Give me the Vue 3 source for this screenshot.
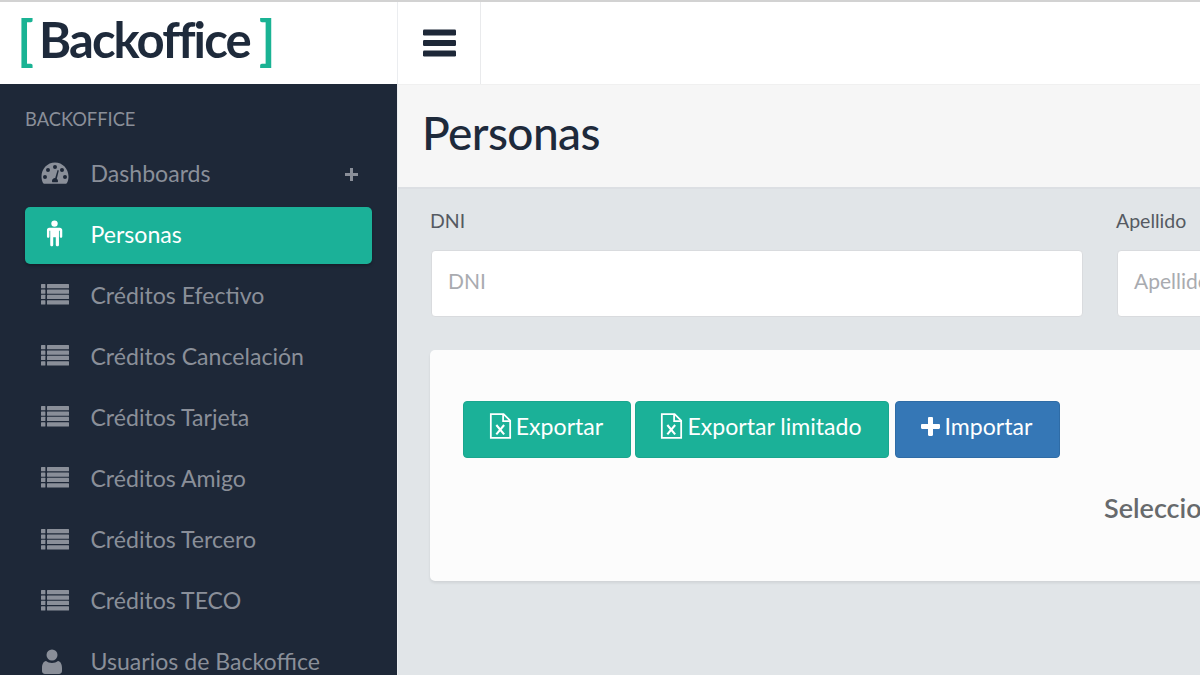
<script setup>
const items = [
  { label: 'Dashboards', icon: 'gauge', plus: true },
  { label: 'Personas', icon: 'male', active: true },
  { label: 'Créditos Efectivo', icon: 'list' },
  { label: 'Créditos Cancelación', icon: 'list' },
  { label: 'Créditos Tarjeta', icon: 'list' },
  { label: 'Créditos Amigo', icon: 'list' },
  { label: 'Créditos Tercero', icon: 'list' },
  { label: 'Créditos TECO', icon: 'list' },
  { label: 'Usuarios de Backoffice', icon: 'user' }
]
const rows = [0, 1, 2, 3]
</script>

<template>
  <div class="app">
    <aside class="side">
      <div class="logo"><span class="br">[</span><span class="word">Backoffice</span><span class="br">]</span></div>
      <nav class="nav">
        <div class="nav-title">BACKOFFICE</div>
        <div v-for="it in items" :key="it.label" class="item" :class="{ active: it.active }">
          <span class="ico">
            <svg v-if="it.icon === 'gauge'" width="28" height="22" viewBox="0 0 28 22" fill="currentColor">
              <path fill-rule="evenodd" d="M14 0.5C6.4 0.5 0.5 6.8 0.5 14.6c0 2.4.5 4.6 1.5 6.5.3.5.7.7 1.2.7h21.6c.5 0 .9-.2 1.2-.7 1-1.9 1.5-4.1 1.5-6.5C27.5 6.8 21.6.5 14 .5zM14 3a2 2 0 1 1 0 4 2 2 0 0 1 0-4zM7 6a2 2 0 1 1 0 4 2 2 0 0 1 0-4zm14 0a2 2 0 1 1 0 4 2 2 0 0 1 0-4zM4 13a2 2 0 1 1 0 4 2 2 0 0 1 0-4zm20 0a2 2 0 1 1 0 4 2 2 0 0 1 0-4zM16.6 8l1.2.5-2 8.2c.7.6 1.2 1.4 1.2 2.3 0 .5-.1.9-.4 1.3h-5.2c-.3-.4-.4-.8-.4-1.3 0-1.6 1.3-3 3-3h.2L16.6 8z"/>
            </svg>
            <svg v-else-if="it.icon === 'male'" width="17" height="27" viewBox="0 0 16 25" fill="currentColor">
              <circle cx="8" cy="3.2" r="3"/>
              <path d="M3 7h10c1.300 0 2.300 1 2.300 2.300v6c0 .8-.5 1.300-1.200 1.300s-1.100-.5-1.100-1.300V10h-.8v13c0 1-.6 1.600-1.400 1.600S9.200 24 9.200 23v-7H6.800v7c0 1-.6 1.600-1.400 1.600S4 24 4 23V10h-.8v5.300c0 .8-.4 1.300-1.100 1.300S.9 16.100.9 15.300v-6C.8 8 1.700 7 3 7z"/>
            </svg>
            <svg v-else-if="it.icon === 'list'" width="28" height="21" viewBox="0 0 28 21" fill="currentColor">
              <template v-for="r in rows" :key="r">
                <rect x="0" :y="r * 5.4" width="4.400" height="4.300" rx=".5"/>
                <rect x="6" :y="r * 5.4" width="22" height="4.300" rx=".5"/>
              </template>
            </svg>
            <svg v-else width="22" height="25" viewBox="0 0 22 25" fill="currentColor">
              <circle cx="11" cy="6" r="5.500"/>
              <path d="M5 12c1.500 1.300 3.700 2 6 2s4.500-.7 6-2c2.500.4 4 3 4 7v3c0 1.600-1.200 3-3 3H4c-1.800 0-3-1.400-3-3v-3c0-4 1.500-6.600 4-7z"/>
            </svg>
          </span>
          <span class="label">{{ it.label }}</span>
          <svg v-if="it.plus" class="plus" width="13" height="13" viewBox="0 0 13 13" fill="currentColor">
            <path d="M5 0h3v5h5v3H8v5H5V8H0V5h5z"/>
          </svg>
        </div>
      </nav>
    </aside>

    <div class="main">
      <header class="top">
        <div class="burger">
          <svg width="33" height="28" viewBox="0 0 33 28" fill="currentColor">
            <rect y="0.500" width="33" height="6" rx="1.200"/>
            <rect y="11" width="33" height="6" rx="1.200"/>
            <rect y="21.500" width="33" height="6" rx="1.200"/>
          </svg>
        </div>
      </header>
      <div class="title-bar"><h1>Personas</h1></div>
      <section class="content">
        <div class="filters">
          <div class="field">
            <label>DNI</label>
            <div class="input">DNI</div>
          </div>
          <div class="field">
            <label>Apellido</label>
            <div class="input">Apellido</div>
          </div>
        </div>
        <div class="card">
          <div class="btns">
            <button class="btn green b1">
              <svg width="23" height="26" viewBox="0 0 22 25" fill="none" stroke="currentColor" stroke-width="1.700">
                <path d="M1.700 1h12.300l6.300 6.300V24H1.700z"/>
                <path d="M13.500 1v6.800h6.800"/>
                <path d="M7 11.500l7.500 9M14.500 11.500l-7.500 9" stroke-width="2"/>
              </svg>
              <span>Exportar</span>
            </button>
            <button class="btn green b2">
              <svg width="23" height="26" viewBox="0 0 22 25" fill="none" stroke="currentColor" stroke-width="1.700">
                <path d="M1.700 1h12.300l6.300 6.300V24H1.700z"/>
                <path d="M13.500 1v6.800h6.800"/>
                <path d="M7 11.500l7.500 9M14.500 11.500l-7.500 9" stroke-width="2"/>
              </svg>
              <span>Exportar limitado</span>
            </button>
            <button class="btn blue b3">
              <svg width="19" height="19" viewBox="0 0 19 19" fill="currentColor">
                <path d="M7 1.200C7 .5 7.500 0 8.200 0h2.600c.7 0 1.200.5 1.200 1.200V7h5.800c.7 0 1.200.5 1.200 1.200v2.600c0 .7-.5 1.200-1.200 1.200H12v5.800c0 .7-.5 1.200-1.200 1.200H8.200C7.500 19 7 18.500 7 17.800V12H1.200C.5 12 0 11.500 0 10.800V8.200C0 7.500.5 7 1.200 7H7z"/>
              </svg>
              <span>Importar</span>
            </button>
          </div>
          <h3 class="select">Seleccione un filtro</h3>
        </div>
      </section>
    </div>
  </div>
</template>

<style scoped>
.app {
  width: 1200px;
  height: 675px;
  overflow: hidden;
  display: flex;
  font-family: Lato, "Open Sans", sans-serif;
  color: #676a6c;
  background: #e1e5e8;
  border-top: 2px solid #d2d2d2;
  box-sizing: border-box;
}
.side {
  width: 397px;
  flex: none;
  display: flex;
  flex-direction: column;
}
.logo {
  height: 82px;
  flex: none;
  background: #fff;
  display: flex;
  align-items: center;
  padding: 0 0 8px 17px;
  box-sizing: border-box;
  font-size: 49px;
  color: #1e2a3b;
  font-weight: 700;
}
.word { letter-spacing: -1.900px; margin: 0 9px 0 5px; }
.br { color: #1ab394; font-weight: 700; font-size: 54px; }
.nav {
  flex: 1;
  background: #1e2838;
  padding: 23px 25px 0;
  color: #8a8f99;
}
.nav-title {
  font-size: 18.300px;
  line-height: 24px;
  height: 39px;
}
.item {
  height: 57px;
  padding-bottom: 4px;
  margin-bottom: 4.100px;
  box-sizing: border-box;
  display: flex;
  align-items: center;
  border-radius: 5px;
  font-size: 23.100px;
  position: relative;
}
.item.active {
  background: #1bb198;
  color: #fff;
  box-shadow: 0 2px 3px rgba(0, 0, 0, 0.25);
}
.ico {
  width: 65.500px;
  padding-left: 16px;
  box-sizing: border-box;
  display: flex;
  flex: none;
}
.active .ico { padding-left: 21px; }
.label { white-space: nowrap; }
.plus { margin-left: auto; margin-right: 14px; margin-top: 3px; }

.main {
  flex: 1;
  min-width: 0;
  display: flex;
  flex-direction: column;
  border-left: 1px solid #ebedf0;
}
.top {
  height: 83px;
  flex: none;
  background: #fff;
  display: flex;
  border-bottom: 1px solid #f0f0f0;
  box-sizing: border-box;
}
.burger {
  width: 83px;
  border-right: 1px solid #e9eaec;
  display: flex;
  align-items: center;
  justify-content: center;
  color: #1e2838;
  box-sizing: border-box;
}
.title-bar {
  height: 104px;
  flex: none;
  background: #f6f6f6;
  border-bottom: 2px solid #dcdfe3;
  box-sizing: border-box;
  display: flex;
  align-items: center;
  padding: 0 0 8px 24px;
}
h1 {
  margin: 0;
  font-size: 46px;
  font-weight: 500;
  color: #1e2a3b;
  letter-spacing: -0.6px;
}
.content {
  width: 1500px;
  padding: 20px 0 0 33px;
}
.filters { display: flex; gap: 34px; }
.field label {
  display: block;
  font-size: 19.500px;
  line-height: 24px;
  font-weight: 400;
  color: #555a62;
  margin: 0 0 17px -1px;
}
.input {
  width: 652px;
  height: 67px;
  box-sizing: border-box;
  background: #fff;
  border: 1px solid #d9dbde;
  border-radius: 4px;
  display: flex;
  align-items: center;
  padding: 0 0 7px 16px;
  font-size: 21px;
  color: #a9abb0;
}
.card {
  margin-top: 33px;
  margin-left: -1px;
  height: 231px;
  background: #fcfcfc;
  border-radius: 5px;
  box-shadow: 0 2px 3px rgba(0, 0, 0, 0.08);
  padding: 51px 33px 0;
  box-sizing: border-box;
}
.btns { display: flex; }
.btn {
  height: 57px;
  border-radius: 4px;
  color: #fff;
  font-family: inherit;
  font-size: 23.100px;
  display: flex;
  align-items: center;
  justify-content: center;
  gap: 4px;
  padding: 0 2px 7px 0;
  border: 1px solid;
}
.green { background: #1bb198; border-color: #1aa68e; }
.blue { background: #3577b6; border-color: #2f6ca6; gap: 5px; }
.b1 { width: 168px; margin-right: 4px; }
.b2 { width: 254px; margin-right: 6px; }
.b3 { width: 165px; }
.select {
  margin: 32px 0 0 641px;
  font-size: 27px;
  line-height: 36px;
  font-weight: 600;
  color: #676a6c;
  white-space: nowrap;
}
</style>
